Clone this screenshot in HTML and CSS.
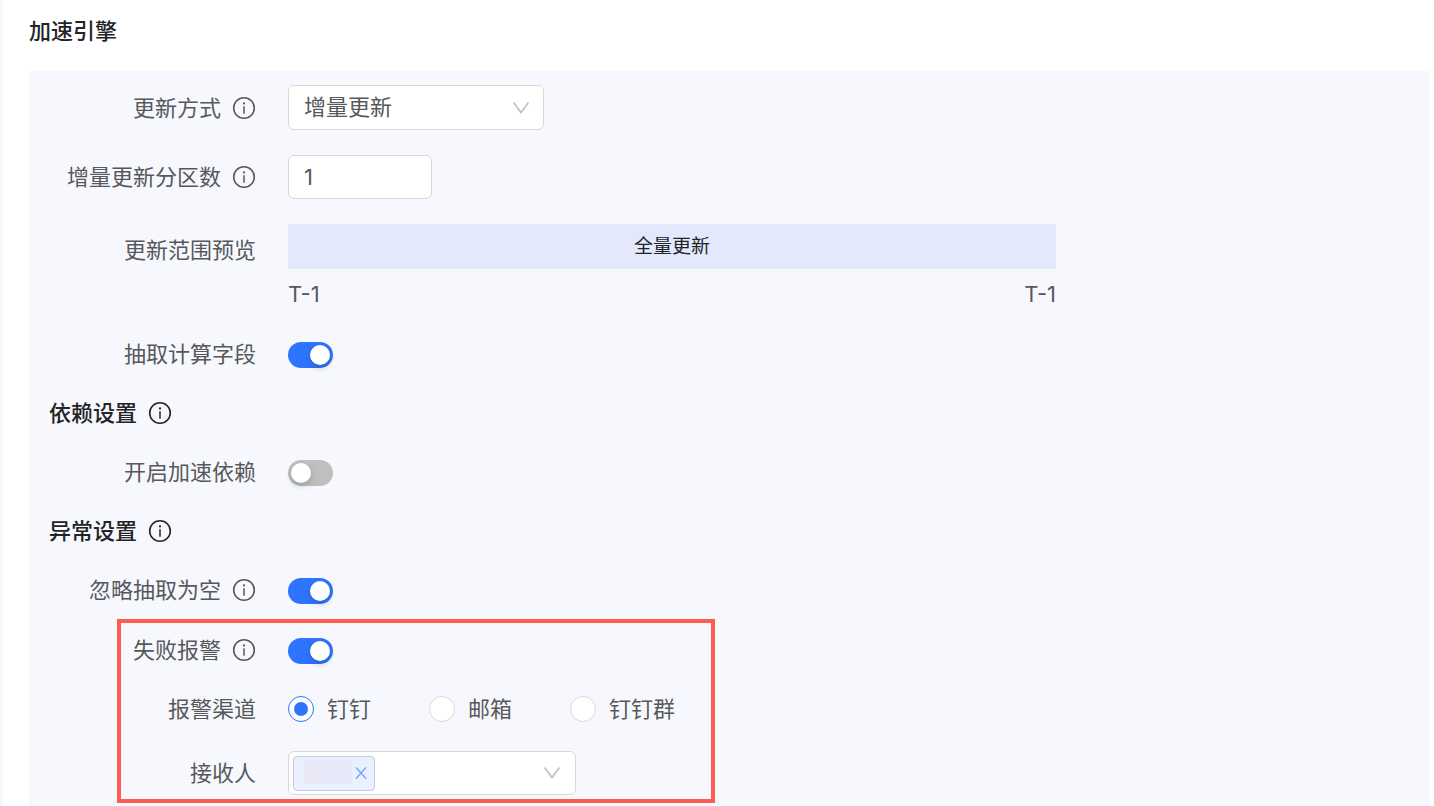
FILE: index.html
```html
<!DOCTYPE html>
<html lang="zh-CN">
<head>
<meta charset="utf-8">
<title>加速引擎</title>
<link rel="stylesheet" href="styles.css">
</head>
<body>
<svg class="defs" aria-hidden="true">
  <symbol id="info" viewBox="0 0 24 24">
    <circle cx="12" cy="12" r="10.3" fill="none" stroke="currentColor" stroke-width="1.6"/>
    <circle cx="12" cy="7.4" r="1.1" fill="currentColor"/>
    <path d="M12 10.2v7.6" fill="none" stroke="currentColor" stroke-width="1.5"/>
  </symbol>
  <symbol id="chevron" viewBox="0 0 18 14">
    <path d="M1.6 1.6L9 11.6L16.4 1.6" fill="none" stroke="currentColor" stroke-width="1.6"/>
  </symbol>
</svg>
<main class="page">
  <h1 class="title">加速引擎</h1>
  <form class="panel">
    <div class="row">
      <div class="label"><label for="mode">更新方式</label><svg class="info"><use href="#info"/></svg></div>
      <div class="select-wrap">
        <select id="mode" class="field select"><option>增量更新</option></select>
        <svg class="chevron"><use href="#chevron"/></svg>
      </div>
    </div>
    <div class="row">
      <div class="label"><label for="parts">增量更新分区数</label><svg class="info"><use href="#info"/></svg></div>
      <input id="parts" class="field number" type="text" value="1">
    </div>
    <div class="row row-top">
      <div class="label label-preview">更新范围预览</div>
      <div class="preview">
        <div class="bar">全量更新</div>
        <div class="range"><span>T-1</span><span>T-1</span></div>
      </div>
    </div>
    <div class="row">
      <div class="label"><label for="extract">抽取计算字段</label></div>
      <input id="extract" class="switch" type="checkbox" role="switch" checked>
    </div>
    <h2 class="section">依赖设置<svg class="info"><use href="#info"/></svg></h2>
    <div class="row">
      <div class="label"><label for="depend">开启加速依赖</label></div>
      <input id="depend" class="switch" type="checkbox" role="switch">
    </div>
    <h2 class="section">异常设置<svg class="info"><use href="#info"/></svg></h2>
    <div class="row">
      <div class="label"><label for="empty">忽略抽取为空</label><svg class="info"><use href="#info"/></svg></div>
      <input id="empty" class="switch" type="checkbox" role="switch" checked>
    </div>
    <div class="alarm">
      <div class="row">
        <div class="label"><label for="alarm">失败报警</label><svg class="info"><use href="#info"/></svg></div>
        <input id="alarm" class="switch" type="checkbox" role="switch" checked>
      </div>
      <div class="row" role="radiogroup" aria-labelledby="channel">
        <div class="label" id="channel">报警渠道</div>
        <div class="radios">
          <label class="option"><input class="radio" type="radio" name="channel" checked>钉钉</label>
          <label class="option"><input class="radio" type="radio" name="channel">邮箱</label>
          <label class="option"><input class="radio" type="radio" name="channel">钉钉群</label>
        </div>
      </div>
      <div class="row">
        <div class="label"><label for="receiver">接收人</label></div>
        <div class="field multi">
          <span class="tag"><span class="masked"></span><button class="remove" type="button" aria-label="移除"><svg class="cross" viewBox="0 0 12 14"><path d="M1 1.5L11 12.5M11 1.5L1 12.5" fill="none" stroke="currentColor" stroke-width="1.4"/></svg></button></span>
          <input id="receiver" class="multi-input" type="text">
          <svg class="chevron"><use href="#chevron"/></svg>
        </div>
      </div>
      <div class="highlight"></div>
    </div>
  </form>
</main>
</body>
</html>
```

FILE: styles.css
```css
* { box-sizing: border-box; }

body {
  margin: 0;
  background: #fff;
  color: #56585c;
  font: 400 22px/34px Inter, "Noto Sans CJK SC", sans-serif;
}

.defs { display: none; }

.page {
  display: flex;
  flex-direction: column;
  min-height: 100vh;
  padding: 14px 4px 0 26px;
  border-left: 3px solid #f6f8fd;
}

.title, .section {
  margin: 0;
  color: #222426;
  font-size: 22px;
  font-weight: 500;
}

.title { padding-bottom: 23px; }

.panel {
  display: flex;
  flex: 1;
  flex-direction: column;
  gap: 25px;
  padding: 14px 20px 11px;
  background: #f6f8fd;
}

.section, .label {
  display: flex;
  align-items: center;
  gap: 11px;
}

.row {
  display: flex;
  align-items: center;
  gap: 32px;
  min-height: 34px;
}

.row-top { align-items: flex-start; }

.label {
  flex: none;
  justify-content: flex-end;
  width: 207px;
}

.label-preview { padding-top: 9px; }

.info {
  flex: none;
  width: 24px;
  height: 24px;
}

.field {
  height: 44px;
  border: 1px solid #d9d9d9;
  border-radius: 6px;
  background: #fff;
  color: #56585c;
  font: inherit;
}

.select-wrap {
  position: relative;
  width: 256px;
}

.select {
  display: block;
  width: 100%;
  height: 45px;
  padding: 0 15px 2px;
  appearance: none;
}

.chevron {
  position: absolute;
  top: 50%;
  right: 14px;
  width: 18px;
  height: 14px;
  margin-top: -7px;
  color: #bfbfbf;
  pointer-events: none;
}

.number {
  width: 144px;
  padding: 0 15px;
}

.preview {
  flex: 0 1 768px;
}

.bar {
  background: #e3e8fd;
  color: #222426;
  font-size: 19px;
  line-height: 45px;
  text-align: center;
}

.range {
  display: flex;
  justify-content: space-between;
  margin: 8px 0 1px;
}

.switch {
  width: 45px;
  height: 26px;
  margin: 2px 0 0;
  padding: 3px;
  border-radius: 13px;
  background: #bfbfbf;
  appearance: none;
}

.switch::before {
  content: "";
  display: block;
  width: 20px;
  height: 20px;
  border-radius: 50%;
  background: #fff;
  box-shadow: 0 3px 6px rgba(0, 35, 11, 0.2);
}

.switch:checked { background: #2e74ff; }
.switch:checked::before { margin-left: auto; }

.alarm {
  position: relative;
  display: flex;
  flex-direction: column;
  gap: 25px;
  padding-top: 1px;
}

.highlight {
  position: absolute;
  top: -13px;
  bottom: -8px;
  left: 68px;
  width: 598px;
  border: 4px solid #ff5b4f;
  pointer-events: none;
}

.radios {
  display: flex;
  gap: 58px;
}

.option {
  display: flex;
  align-items: center;
  gap: 13px;
}

.radio {
  display: grid;
  place-items: center;
  width: 26px;
  height: 26px;
  margin: 0;
  border: 1px solid #d9d9d9;
  border-radius: 50%;
  background: #fff;
  appearance: none;
}

.radio:checked { border-color: #2e74ff; }

.radio:checked::before {
  content: "";
  width: 14px;
  height: 14px;
  border-radius: 50%;
  background: #2e74ff;
}

.multi {
  position: relative;
  display: flex;
  align-items: center;
  width: 288px;
  padding: 0 4px;
}

.tag {
  display: flex;
  flex: none;
  align-items: center;
  gap: 3px;
  height: 35px;
  padding: 0 7px 0 10px;
  border: 1px solid #c3cbdf;
  border-radius: 4px;
  background: #eaf0ff;
}

.masked {
  width: 48px;
  height: 24px;
  margin-bottom: 2px;
  background: linear-gradient(90deg, #e9e8f5, #e6e8fa);
}

.remove {
  display: flex;
  padding: 0;
  border: 0;
  background: none;
  color: #75a2ff;
}

.cross {
  width: 12px;
  height: 14px;
}

.multi-input {
  flex: 1;
  min-width: 0;
  border: 0;
  outline: 0;
  background: none;
  font: inherit;
}
```
